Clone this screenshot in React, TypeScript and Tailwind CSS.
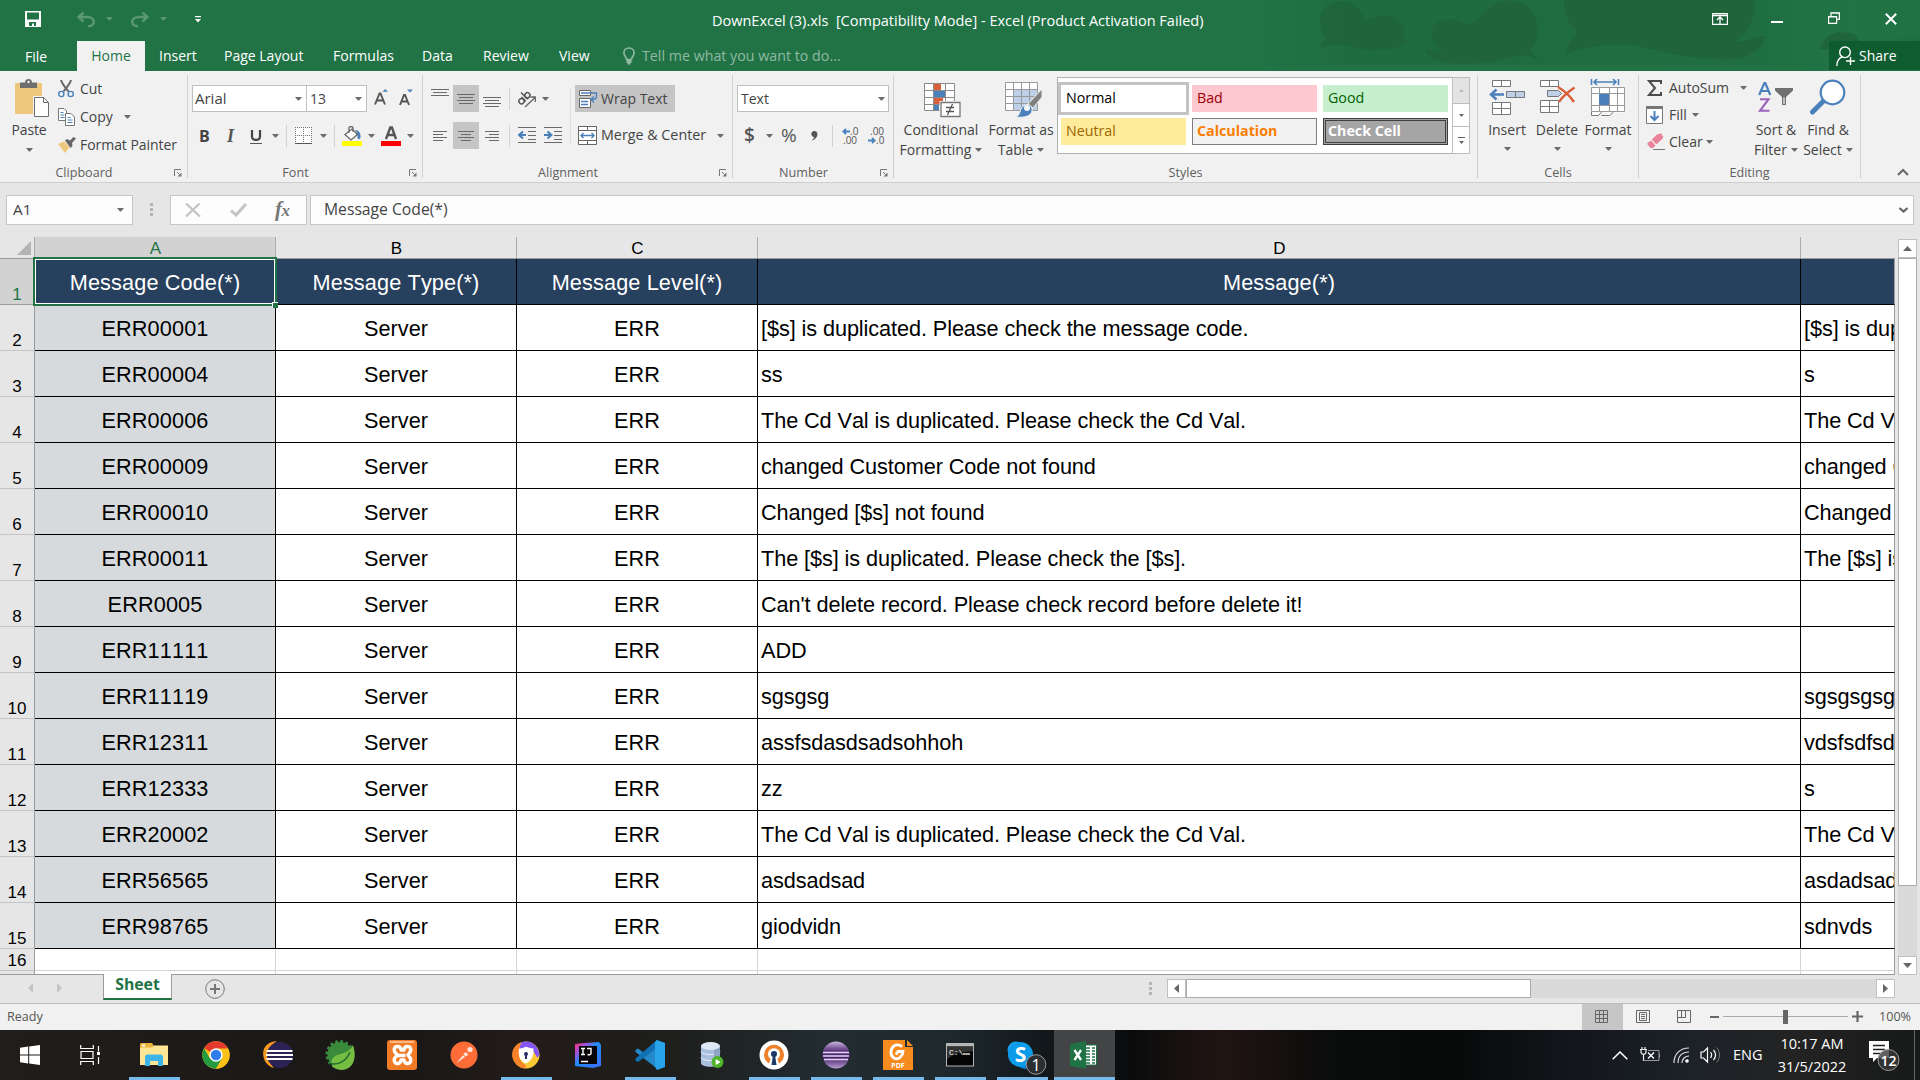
import React from "react";

type Kids = { children?: React.ReactNode };

const Caret = ({ className = "" }: { className?: string }) => (
  <svg className={`shrink-0 ${className}`} width="7" height="4" viewBox="0 0 7 4">
    <path d="M0 0h7L4 3.6H3z" fill="#6b6b6b" />
  </svg>
);

const Launcher = () => (
  <svg width="8" height="8" viewBox="0 0 8 8" className="mr-[5px] shrink-0">
    <path d="M.5 7V.5H7" fill="none" stroke="#777" />
    <path d="M3 3l2.5 2.5" stroke="#777" />
    <path d="M7.5 3.5v4h-4z" fill="#777" />
  </svg>
);

function Group({ label, launcher, className, children }: Kids & { label: string; launcher?: boolean; className: string }) {
  return (
    <section className={`mt-[4px] flex h-[103px] shrink-0 flex-col border-r border-[#d0d0d0] ${className}`}>
      <div className="h-[88px] shrink-0">{children}</div>
      <div className="flex h-[15px] items-center pt-[5px]">
        <div className={`flex-1 text-center text-[12.6px] leading-none whitespace-nowrap text-[#5f5f5f] ${launcher ? "pr-[6px]" : ""}`}>{label}</div>
        {launcher && <Launcher />}
      </div>
    </section>
  );
}

const Sep = ({ className = "" }: { className?: string }) => <span className={`w-px shrink-0 bg-[#d2d2d2] ${className}`} />;

const Lines = ({ rows, h, className = "" }: { rows: [number, number, number][]; h: number; className?: string }) => (
  <svg width="18" height={h} viewBox={`0 0 18 ${h}`} className={`shrink-0 ${className}`}>
    {rows.map(([x, y, w]) => (
      <rect key={y} x={x} y={y} width={w} height="1" fill="#6a6a6a" />
    ))}
  </svg>
);

/* ---------- title bar and tabs ---------- */

function TitleArt() {
  return (
    <svg className="absolute top-0 left-[1260px]" width="660" height="65" viewBox="0 0 660 65">
      <defs>
        <linearGradient id="fade" x1="0" x2="1" y1="0" y2="0">
          <stop offset="0" stopColor="#1f6a40" stopOpacity="0" />
          <stop offset=".14" stopColor="#1f6a40" stopOpacity=".85" />
          <stop offset=".75" stopColor="#1f6c41" stopOpacity=".8" />
          <stop offset=".9" stopColor="#217346" stopOpacity=".3" />
          <stop offset="1" stopColor="#1f6a40" stopOpacity=".7" />
        </linearGradient>
      </defs>
      <rect width="660" height="65" fill="url(#fade)" />
      <g fill="#1f643b">
        <path opacity=".8" d="M60 48c2-6 4-8 6-10-9-10-8-24 0-31 8-8 25-7 33 2 5 5 5 8 6 10 20-5 34-5 38 6 3 8 1 12 0 15l5 2c-9 7-20 8-40 8-16-2-30-10-48-2z" />
        <path d="M167 49c3 0 10 3 20 4l-1-1c-12-3-15-13-14-22 2-10 20-16 34-5 14-4 18-14 28-21 14-7 34-3 41 13 6 15 2 25-5 32 2 4 6 6 8 11-10-6-16-6-26-3-22 8-66 8-78 3-6-4-8-8-7-11z" />
        <path d="M304 0h190c2 14-3 32-20 42 14 0 22-7 31-6-2 12-14 22-33 23-40 2-70-8-98-14-30-2-50 2-69 9 3-9 6-16 13-22-12-10-14-22-14-32z" />
        <path d="M562 44c4-8 16-16 30-11 8 4 8 12 8 16h-40z" />
      </g>
      <path d="M540 0c14 4 26 10 32 32l88 6V0z" fill="#217346" opacity=".6" />
    </svg>
  );
}

const tabs: [string, string][] = [
  ["Insert", "w-[65px]"],
  ["Page Layout", "w-[109px]"],
  ["Formulas", "w-[89px]"],
  ["Data", "w-[61px]"],
  ["Review", "w-[76px]"],
  ["View", "w-[63px]"],
];

function TitleBar() {
  return (
    <header className="relative h-[71px] bg-[#217346] text-white">
      <TitleArt />
      <div className="relative flex h-[41px]">
        <div className="flex w-[712px] items-start">
          <svg width="16" height="16" viewBox="0 0 16 16" className="mt-[11px] ml-[25px]">
            <path fillRule="evenodd" fill="#fff" d="M0 0h16v16H0zM2 1.400h12v7.200H2zM4 11h7v4H9v-2.600H7V15H4z" />
          </svg>
          <svg width="18" height="16" viewBox="0 0 18 16" className="mt-[12px] ml-[36px]">
            <path d="M1 5h9c9 0 9 9.300 1 9.300M6.500 .5L1.500 5l5 4.500" fill="none" stroke="#5a9775" strokeWidth="2.400" />
          </svg>
          <svg width="7" height="4" viewBox="0 0 7 4" className="mt-[17px] ml-[11px]"><path d="M0 0h7L4 3.600H3z" fill="#5a9775" /></svg>
          <svg width="18" height="16" viewBox="0 0 18 16" className="mt-[12px] ml-[18px]">
            <path d="M17 5H8C-1 5-1 14.300 7 14.300M11.500 .5l5 4.500-5 4.500" fill="none" stroke="#5a9775" strokeWidth="2.400" />
          </svg>
          <svg width="7" height="4" viewBox="0 0 7 4" className="mt-[17px] ml-[11px]"><path d="M0 0h7L4 3.600H3z" fill="#5a9775" /></svg>
          <svg width="6" height="7" viewBox="0 0 6 7" className="mt-[16px] ml-[28px]"><path d="M0 0h6v1.300H0zM0 3h6L3 6.500z" fill="#fff" /></svg>
        </div>
        <div className="w-[1000px] pt-[11px] text-[14.5px] leading-[20px] whitespace-pre">DownExcel (3).xls  [Compatibility Mode] - Excel (Product Activation Failed)</div>
        <svg width="16" height="12" viewBox="0 0 16 12" className="mt-[13px]">
          <path d="M.5.5h15v11H.5zM1 2.500h14M8 11V4.500M5 7l3-3 3 3" fill="none" stroke="#fff" strokeWidth="1.300" />
        </svg>
        <span className="mt-[21px] ml-[43px] h-[2px] w-[12px] bg-white" />
        <svg width="12" height="12" viewBox="0 0 12 12" className="mt-[12px] ml-[45px]">
          <path d="M.6 4.500h8v6.900h-8zM3 4V.8h8.400v6.500H9M.6 5h8M3 1.200h8.400" fill="none" stroke="#fff" strokeWidth="1.200" />
        </svg>
        <svg width="12" height="12" viewBox="0 0 12 12" className="mt-[13px] ml-[45px]">
          <path d="M.8.8l10.400 10.400M11.200.8L.8 11.200" stroke="#fff" strokeWidth="2" />
        </svg>
      </div>
      <nav className="relative flex h-[30px] items-center text-[14px] leading-none whitespace-nowrap">
        <span className="w-[77px] pt-[2px] pl-[25px]">File</span>
        <span className="mr-[14px] flex h-full w-[68px] items-center justify-center bg-[#f1f1f1] text-[#217346]">Home</span>
        {tabs.map(([t, w]) => (
          <span key={t} className={w}>{t}</span>
        ))}
        <svg width="12" height="18" viewBox="0 0 12 18" className="ml-px shrink-0 text-[#90b9a3]">
          <path d="M3.500 12.500c0-2.500-2.600-3.500-2.600-6.600C.9 3 3 1 6 1s5.100 2 5.100 4.900c0 3.100-2.600 4.100-2.600 6.600z" fill="none" stroke="currentColor" strokeWidth="1.600" />
          <path d="M3.500 13h5v3H7.500v1.500h-3V16h-1z" fill="currentColor" />
        </svg>
        <span className="w-[1194px] pl-[7px] text-[14.25px] text-[#90b9a3]">Tell me what you want to do...</span>
        <span className="mb-px flex h-[29px] w-[91px] items-center self-start bg-[#0f5c30] pl-[7px]">
          <svg width="19" height="20" viewBox="0 0 19 20" className="mr-[4px]">
            <circle cx="9" cy="6.300" r="5.300" fill="none" stroke="#fff" strokeWidth="1.400" />
            <path d="M.8 20c0-5 2.500-8.300 6-9.500M14.500 11v8M10 15h9" fill="none" stroke="#fff" strokeWidth="1.400" />
          </svg>
          Share
        </span>
      </nav>
    </header>
  );
}

/* ---------- ribbon ---------- */

function Clipboard() {
  return (
    <Group label="Clipboard" launcher className="w-[188px]">
      <div className="flex">
        <div className="flex w-[58px] flex-col items-center">
          <svg width="34" height="38" viewBox="0 0 34 38" className="mt-[4px] ml-[6px]">
            <rect x="0" y="4" width="27" height="31" rx="1" fill="#edc77d" />
            <path d="M5 3.500h5C10 1 11.500 0 13.500 0S17 1 17 3.500h5V9H5z" fill="#6e6e6e" />
            <circle cx="13.500" cy="3" r="1.200" fill="#f1f1f1" />
            <path d="M18 17h11l5 5v16H18z" fill="#f1f1f1" />
            <path d="M19.500 18.500h9l5 5v14h-14z" fill="#fff" stroke="#6e6e6e" />
            <path d="M28.500 18.500v5h5" fill="none" stroke="#6e6e6e" />
          </svg>
          <span className="mt-[5px] text-[14px] leading-[16px] tracking-[-0.1px]">Paste</span>
          <Caret className="mt-[10px]" />
        </div>
        <div className="flex flex-col text-[14px] leading-[28px] tracking-[-0.05px] whitespace-nowrap">
          <div className="flex h-[28px] items-center">
            <svg width="16" height="18" viewBox="0 0 16 18" className="mr-[6px]">
              <path d="M3 0c1 4 4 7 7.500 11.500M13 0c-1 4-4 7-7.500 11.500" fill="none" stroke="#666" strokeWidth="2" />
              <circle cx="3.300" cy="14" r="2.600" fill="none" stroke="#4a80bb" strokeWidth="1.400" />
              <circle cx="12.700" cy="14" r="2.600" fill="none" stroke="#4a80bb" strokeWidth="1.400" />
            </svg>
            Cut
          </div>
          <div className="flex h-[28px] items-center">
            <svg width="17" height="18" viewBox="0 0 17 18" className="mr-[5px]">
              <path d="M.5.5H6l2.500 2.500v9.500h-8z" fill="#fff" stroke="#777" />
              <path d="M2.500 4.500h3M2.500 7h4M2.500 9.500h4" stroke="#4a80bb" />
              <path d="M7.500 5.500H13l3.500 3.500v8.500h-9z" fill="#fff" stroke="#777" />
              <path d="M9.500 9.500h3M9.500 12h5M9.500 14.500h5" stroke="#4a80bb" />
            </svg>
            <span className="w-[44px]">Copy</span>
            <Caret />
          </div>
          <div className="flex h-[28px] items-center">
            <svg width="18" height="16" viewBox="0 0 18 16" className="mr-[4px]">
              <path d="M0 7l6-2.500 5.500 5.500L7 16z" fill="#edc77d" />
              <path d="M7 3.500L9 2l3 1.500L15.500 0 18 1.500 14 6l.5 3-2 2z" fill="#666" />
            </svg>
            Format Painter
          </div>
        </div>
      </div>
    </Group>
  );
}

function FontGroup() {
  return (
    <Group label="Font" launcher className="w-[235px]">
      <div className="mt-[10px] ml-[4px] flex h-[27px] text-[14px] leading-[25px]">
        <div className="flex w-[115px] items-center border border-[#c0c0c0] bg-white pl-[2px]"><span className="w-[100px] text-[15px]">Arial</span><Caret /></div>
        <div className="-ml-px flex w-[61px] items-center border border-[#c0c0c0] bg-white pl-[3px]"><span className="w-[45px]">13</span><Caret /></div>
        <svg width="15" height="18" viewBox="0 0 15 18" className="mt-[3px] ml-[7px]">
          <path d="M1 16.500L5.500 5.500h1L11 16.500M3 12.500h6" fill="none" stroke="#555" strokeWidth="1.900" /><path d="M8.500 3.800h5.500L11.200 1z" fill="#4a80bb" />
        </svg>
        <svg width="15" height="18" viewBox="0 0 15 18" className="mt-[3px] ml-[10px]">
          <path d="M1 17L5 7h1l4 10M3 13.500h5" fill="none" stroke="#555" strokeWidth="1.900" /><path d="M8 1.500h6L11 4.500z" fill="#4a80bb" />
        </svg>
      </div>
      <div className="mt-[10px] flex h-[27px] items-center">
        <span className="ml-[11px] w-[28px] text-[16px] leading-none font-bold text-[#444]">B</span>
        <span className="w-[24px] font-['Liberation_Serif'] text-[18px] leading-none font-bold text-[#555] italic">I</span>
        <svg width="12" height="17" viewBox="0 0 12 17" className="mt-[3px] -ml-px mr-px"><path d="M2 1v6.500C2 12 10 12 10 7.500V1" fill="none" stroke="#444" strokeWidth="2.200" /><path d="M0 14.500h12" stroke="#555" /></svg>
        <Caret className="ml-[9px]" />
        <Sep className="ml-[7px] h-[22px]" />
        <svg width="17" height="17" viewBox="0 0 17 17" className="ml-[8px]">
          <path d="M1 1h7v7H1zM9 1h7v7H9zM1 9h7v7H1zM9 9h7v7H9z" fill="#fff" />
          <path d="M.5 0v16M16.500 0v16M8.500 0v16M0 .5h17M0 8.500h17" fill="none" stroke="#777" strokeDasharray="1 1" /><path d="M0 16.500h17" stroke="#555" />
        </svg>
        <Caret className="ml-[8px]" />
        <Sep className="ml-[7px] h-[22px]" />
        <svg width="20" height="20" viewBox="0 0 20 20" className="ml-[7px]">
          <path d="M13 4c4 0 6 3 5.500 8-.5 1.500-2.500 1.500-3 0 0-3 0-5-2.500-8z" fill="#4a80bb" />
          <path d="M3 8.500L10 3l5.500 5.500L9 14z" fill="#fff" stroke="#666" strokeWidth="1.300" /><path d="M7 7V2c0-2 4-2 4 0v4" fill="none" stroke="#666" strokeWidth="1.300" />
          <rect y="15" width="20" height="5" fill="#ff0" />
        </svg>
        <Caret className="ml-[6px]" />
        <svg width="20" height="20" viewBox="0 0 20 20" className="ml-[6px]">
          <path d="M5 13L9.300 1.500h1.600L15 13M6.500 9h7" fill="none" stroke="#555" strokeWidth="2.400" /><rect y="15" width="20" height="5" fill="red" />
        </svg>
        <Caret className="ml-[6px]" />
      </div>
    </Group>
  );
}

function Indent({ right, className }: { right?: boolean; className: string }) {
  return (
    <svg width="18" height="17" viewBox="0 0 18 17" className={className}>
      <path d="M0 .5h18M10 4.500h8M10 8.500h8M10 12.500h8M0 15.500h18" stroke="#6a6a6a" />
      <path d={right ? "M0 8h7M3.500 4.500L7.300 8l-3.800 3.500" : "M8 8H1.500M5 4.500L1.200 8 5 11.500"} fill="none" stroke="#4a80bb" strokeWidth="2.200" />
    </svg>
  );
}

function Alignment() {
  return (
    <Group label="Alignment" launcher className="w-[310px]">
      <div className="mt-[10px] flex">
        <div className="flex w-[147px] flex-col">
          <div className="flex h-[27px] items-center">
            <Lines className="mb-[12px] ml-[8px]" h={7} rows={[[0, 0, 18], [2, 3, 14], [0, 6, 18]]} />
            <span className="ml-[4px] flex h-[27px] w-[26px] items-center justify-center bg-[#c5c5c5]">
              <Lines h={10} rows={[[0, 0, 18], [2, 3, 14], [0, 6, 18], [2, 9, 14]]} />
            </span>
            <Lines className="mt-[7px] ml-[4px]" h={10} rows={[[0, 0, 18], [2, 3, 14], [0, 6, 18], [2, 9, 14]]} />
            <Sep className="ml-[8px] h-[22px]" />
            <svg width="19" height="18" viewBox="0 0 19 18" className="ml-[7px] shrink-0">
              <g transform="rotate(-45 7 8)" fill="none" stroke="#555" strokeWidth="1.500"><circle cx="3" cy="8.500" r="2.600" /><path d="M6 5.500v6M8.800 2v9.500" /><circle cx="11.300" cy="8.500" r="2.600" /></g>
              <path d="M8 17L18 7.500M13.500 7h4.800v5" fill="none" stroke="#666" strokeWidth="1.300" />
            </svg>
            <Caret className="ml-[6px]" />
          </div>
          <div className="mt-[10px] flex h-[27px] items-center">
            <Lines className="ml-[10px]" h={10} rows={[[0, 0, 14], [0, 3, 10], [0, 6, 14], [0, 9, 10]]} />
            <span className="ml-[2px] flex h-[27px] w-[26px] items-center justify-center bg-[#c5c5c5]">
              <Lines h={10} rows={[[1, 0, 16], [4, 3, 10], [1, 6, 16], [4, 9, 10]]} />
            </span>
            <Lines className="ml-[6px]" h={10} rows={[[0, 0, 14], [4, 3, 10], [0, 6, 14], [4, 9, 10]]} />
            <Sep className="ml-[6px] h-[22px]" />
            <Indent className="ml-[8px] shrink-0" />
            <Indent className="ml-[8px] shrink-0" right />
          </div>
        </div>
        <Sep className="mt-[4px] h-[55px] opacity-60" />
        <div className="ml-[4px] flex flex-col text-[14px] leading-none whitespace-nowrap">
          <div className="flex h-[27px] w-[100px] items-center bg-[#c5c5c5] pl-[4px]">
            <svg width="19" height="18" viewBox="0 0 19 18" className="mr-[3px] shrink-0">
              <path d="M.5.5h11v5H.5zM.5 8.500h11v9H.5z" fill="#fff" stroke="#666" />
              <path d="M2 3h15.500v4c0 2-2 2.500-5 2.500M15 6.500L12 9.500l3 3M2 11.500h7M2 14.500h7" fill="none" stroke="#4a80bb" strokeWidth="1.400" />
            </svg>
            Wrap Text
          </div>
          <div className="mt-[10px] flex h-[27px] items-center pl-[3px]">
            <svg width="19" height="19" viewBox="0 0 19 19" className="mr-[4px] shrink-0">
              <path d="M.5.5h18v18H.5zM.5 4.500h18M.5 14.500h18M9.500.5v4M9.500 14.500v4" fill="#fff" stroke="#666" />
              <path d="M3 9.500h13M5.500 7L3 9.500 5.500 12M13.500 7L16 9.500 13.500 12" fill="none" stroke="#4a80bb" strokeWidth="1.400" />
            </svg>
            <span className="w-[116px] text-[14.3px]">Merge &amp; Center</span>
            <Caret />
          </div>
        </div>
      </div>
    </Group>
  );
}

function NumberGroup() {
  return (
    <Group label="Number" launcher className="w-[161px]">
      <div className="mt-[10px] ml-[4px] flex h-[27px] w-[152px] items-center border border-[#c0c0c0] bg-white pl-[3px] text-[14px] leading-none">
        <span className="w-[137px]">Text</span><Caret />
      </div>
      <div className="mt-[10px] flex h-[27px] items-center text-[#555]">
        <span className="ml-[11px] w-[22px] text-[19px] leading-none font-semibold">$</span>
        <Caret />
        <span className="ml-[8px] w-[30px] text-[19px] leading-none">%</span>
        <svg width="7" height="10" viewBox="0 0 7 10"><path d="M3.500 0C8 0 7.500 8 .5 9.500 3 7.500 3 6.500 3 6 -.5 6-.8 0 3.500 0z" fill="#555" /></svg>
        <Sep className="ml-[14px] h-[22px]" />
        <div className="ml-[9px] flex w-[26px] flex-col text-[10px] leading-[9px]">
          <span className="flex items-center"><svg width="8" height="7" viewBox="0 0 8 7"><path d="M8 3.500H2M4 .8L1.200 3.500 4 6.200" fill="none" stroke="#4a80bb" strokeWidth="1.800" /></svg>.0</span>
          <span className="pl-px">.00</span>
        </div>
        <div className="flex flex-col text-[10px] leading-[9px]">
          <span className="pl-[2px]">.00</span>
          <span className="flex items-center"><svg width="8" height="7" viewBox="0 0 8 7"><path d="M0 3.500h6M4 .8l2.800 2.700L4 6.200" fill="none" stroke="#4a80bb" strokeWidth="1.800" /></svg>.0</span>
        </div>
      </div>
    </Group>
  );
}

function BigButton({ icon, lines, width, split }: { icon: React.ReactNode; lines: string[]; width: string; split?: boolean }) {
  return (
    <div className={`flex shrink-0 flex-col items-center text-[14px] leading-[20px] whitespace-nowrap ${width}`}>
      <div className="h-[45px] pt-[4px]">{icon}</div>
      <span>{lines[0]}</span>
      {split ? <Caret className="mt-[7px]" /> : <span className="flex items-center gap-[4px]">{lines[1]}<Caret /></span>}
    </div>
  );
}

const CondIcon = (
  <svg width="38" height="36" viewBox="0 0 38 36" className="mt-[3px] ml-[4px]">
    <path d="M.5 1.500h30v27H.5z" fill="#fff" />
    <path d="M10 2h7v6h-7zM10 16h9v6h-9z" fill="#d9603b" /><path d="M10 9h11v6H10zM10 23h5v6h-5z" fill="#4a80bb" />
    <path d="M.5 1.500h30v27H.5zM.5 8.500h30M.5 15.500h30M.5 22.500h30M9.500 1v28M21.500 1v28" fill="none" stroke="#8a8a8a" />
    <path d="M15.500 19h21v16.500h-21z" fill="#f1f1f1" />
    <path d="M17 20.500h19v14H17z" fill="#fff" stroke="#777" strokeWidth="1.300" />
    <path d="M22 25.500h8M22 29.500h8M28.500 22l-5 11" stroke="#555" strokeWidth="1.300" />
  </svg>
);

const TableIcon = (
  <svg width="38" height="36" viewBox="0 0 38 36" className="mt-[3px] ml-[3px]">
    <path d="M1.500.5h32v28h-32z" fill="#fff" /><path d="M10 8h24v20H10z" fill="#bdd0e8" />
    <path d="M1.500.5h32v28h-32zM1.500 7.500h32M1.500 14.500h32M1.500 21.500h32M9.500.5v28M17.500.5v28M25.500.5v28" fill="none" stroke="#999" />
    <path d="M38 7v8L29 26l-5-4z" fill="#808080" stroke="#f1f1f1" /><path d="M12 35c5-2 3-9 9-12 4-2 8 2 7 6-1 5-7 7-16 6z" fill="#4a80bb" stroke="#f1f1f1" />
    <circle cx="23" cy="26" r="3" fill="#f5f8fb" />
  </svg>
);

const swatches: [string, string][] = [
  ["Normal", "bg-white text-black outline-[3px] outline-[#c3c3c3]"],
  ["Bad", "bg-[#ffc7ce] text-[#9c0006]"],
  ["Good", "bg-[#c6efce] text-[#006100]"],
  ["Neutral", "bg-[#ffeb9c] text-[#9c6500]"],
  ["Calculation", "bg-[#f2f2f2] font-bold text-[#fa7d00] shadow-[inset_0_0_0_1px_#7f7f7f]"],
  ["Check Cell", "bg-[#a5a5a5] font-bold text-white shadow-[inset_0_0_0_1px_#3f3f3f,inset_0_0_0_2px_#a5a5a5,inset_0_0_0_3px_#3f3f3f]"],
];

function Styles() {
  return (
    <Group label="Styles" className="w-[584px]">
      <div className="flex">
        <BigButton width="w-[94px]" icon={CondIcon} lines={["Conditional", "Formatting"]} />
        <BigButton width="w-[66px]" icon={TableIcon} lines={["Format as", "Table"]} />
        <div className="mt-[2px] ml-[3px] grid h-[77px] w-[396px] grid-cols-[125px_125px_125px] content-start gap-[6px] border border-[#b0b0b0] bg-white pt-[7px] pl-[3px]">
          {swatches.map(([t, c]) => (
            <span key={t} className={`flex h-[27px] items-center pl-[5px] text-[14.25px] leading-none ${c}`}>{t}</span>
          ))}
        </div>
        <div className="mt-[2px] -ml-px flex h-[77px] w-[18px] flex-col border border-[#bdbdbd] bg-white">
          <span className="flex h-[26px] items-center justify-center border-b border-[#bdbdbd] bg-[#e3e3e3]"><svg width="5" height="3"><path d="M0 3h5L2.500 0z" fill="#bbb" /></svg></span>
          <span className="flex h-[23px] items-center justify-center border-b border-[#bdbdbd]"><svg width="5" height="3"><path d="M0 0h5L2.500 3z" fill="#666" /></svg></span>
          <span className="flex flex-1 items-center justify-center"><svg width="7" height="7"><path d="M0 0h7v1H0zM1 4h5L3.500 7z" fill="#666" /></svg></span>
        </div>
      </div>
    </Group>
  );
}

const InsertIcon = (
  <svg width="36" height="36" viewBox="0 0 36 36">
    <path d="M3.500 1.500h18v6h-18zM12.500 1.500v6M3.500 23.500h18v12h-18zM12.500 23.500v12M3.500 29.500h18" fill="#fff" stroke="#777" />
    <path d="M17.500 12.500h18v6h-18zM26.500 12.500v6" fill="#bdd0e8" stroke="#777" />
    <path d="M15 15.500H3M7.500 10.500l-5.500 5 5.500 5" fill="none" stroke="#4a80bb" strokeWidth="2.500" />
  </svg>
);
const DeleteIcon = (
  <svg width="36" height="36" viewBox="0 0 36 36" className="ml-[2px]">
    <path d="M.5 1.500h18v6H.5zM9.500 1.500v6M.5 21.500h18v12H.5zM9.500 21.500v12M.5 27.500h18" fill="#fff" stroke="#777" />
    <path d="M7.500 11.500h11l3 3-3 3h-11z" fill="#bdd0e8" stroke="#777" />
    <path d="M18 8c5 3 12 9 16 15M34.500 8.500C28 13 22 18 19 23" fill="none" stroke="#d9603b" strokeWidth="2.400" />
  </svg>
);
const FormatIcon = (
  <svg width="36" height="38" viewBox="0 0 36 38">
    <path d="M1.500 0v6M28.500 0v6M4 3h22M7 0L4 3l3 3M23 0l3 3-3 3" fill="none" stroke="#4a80bb" strokeWidth="1.600" />
    <path d="M1.500 8.500h33v25h-33z" fill="#fff" /><path d="M1.500 8.500h33v24h-33zM1.500 14.500h33M1.500 26.500h33M9.500 8v24M19.500 8v24M27.500 8v24" fill="none" stroke="#999" />
    <path d="M9 15h10v11H9z" fill="#4a80bb" /><path d="M1.500 33v3.500h7l3-3.500M11.500 36.500h8l4-3.500" fill="#fff" stroke="#777" />
  </svg>
);
const SortIcon = (
  <svg width="36" height="36" viewBox="0 0 36 36">
    <path d="M1.200 16L6.300 4h1L12.300 16M3 12h7.500" fill="none" stroke="#4a80bb" strokeWidth="2.200" />
    <path d="M2 20.200h8.500L2 31.800h9.500" fill="none" stroke="#9b62bb" strokeWidth="2.100" />
    <path d="M17 9h18v2.500L28 18v8h-4v-8l-7-6.500z" fill="#707070" /><path d="M26 18.500v6.500" stroke="#f1f1f1" strokeWidth="1.300" />
  </svg>
);
const FindIcon = (
  <svg width="36" height="36" viewBox="0 0 36 36">
    <path d="M2.500 33L14 21.500" stroke="#4a80bb" strokeWidth="5" strokeLinecap="round" /><circle cx="22.500" cy="13.500" r="11.800" fill="#fff" stroke="#4a80bb" strokeWidth="2.200" />
  </svg>
);

function Editing() {
  return (
    <Group label="Editing" className="w-[222px]">
      <div className="flex">
        <div className="-mt-px flex w-[112px] flex-col pl-[8px] text-[14px] leading-none">
          <div className="flex h-[27px] items-center">
            <svg width="15" height="16" viewBox="0 0 15 16" className="mr-[7px]"><path d="M14 4V1H2l6 7-6 7h12v-3" fill="none" stroke="#4c4c4c" strokeWidth="2" /></svg>
            <span className="w-[71px]">AutoSum</span><Caret />
          </div>
          <div className="flex h-[27px] items-center">
            <svg width="17" height="18" viewBox="0 0 17 18" className="mr-[6px] -ml-px"><path d="M.5.500h16v17H.5z" fill="#fff" stroke="#777" /><path d="M0 0h17v3H0z" fill="#777" /><path d="M8.500 5v9M4.500 10l4 4 4-4" fill="none" stroke="#4a80bb" strokeWidth="2" /></svg>
            <span className="w-[23px]">Fill</span><Caret />
          </div>
          <div className="flex h-[27px] items-center">
            <svg width="18" height="17" viewBox="0 0 18 17" className="mr-[4px]"><path d="M10 1.500L14 .3l2.300 3.500-1 2.200-6 5.500-4.500-5z" fill="#e8839a" /><path d="M4 7.500L8.500 12.500 6 15H3.500L.5 11.500V10z" fill="#e8839a" /><path d="M6 16.500h12" stroke="#777" /></svg>
            <span className="w-[37px]">Clear</span><Caret />
          </div>
        </div>
        <BigButton width="w-[50px]" icon={SortIcon} lines={["Sort &", "Filter"]} />
        <BigButton width="w-[54px]" icon={FindIcon} lines={["Find &", "Select"]} />
      </div>
    </Group>
  );
}

function Ribbon() {
  return (
    <div className="flex h-[112px] border-b border-[#cfcfcf] bg-[#f1f1f1] text-[#444]">
      <Clipboard />
      <FontGroup />
      <Alignment />
      <NumberGroup />
      <Styles />
      <Group label="Cells" className="w-[161px]">
        <div className="flex pl-[4px]">
          <BigButton width="w-[50px]" icon={InsertIcon} lines={["Insert"]} split />
          <BigButton width="w-[50px]" icon={DeleteIcon} lines={["Delete"]} split />
          <BigButton width="w-[52px]" icon={FormatIcon} lines={["Format"]} split />
        </div>
      </Group>
      <Editing />
      <svg width="12" height="8" viewBox="0 0 12 8" className="mt-[97px] ml-[36px]"><path d="M1 7l5-5 5 5" fill="none" stroke="#666" strokeWidth="2" /></svg>
    </div>
  );
}

function FormulaBar() {
  return (
    <div className="flex h-[54px] bg-[#e6e6e6] pt-[12px] text-[15px] leading-none text-[#444]">
      <div className="ml-[6px] flex h-[30px] w-[127px] items-center border border-[#c6c6c6] bg-[#fdfdfd] pl-[6px]"><span className="w-[104px] text-[15.3px]">A1</span><Caret /></div>
      <div className="mt-[8px] ml-[17px] flex w-[20px] flex-col gap-[2px]">
        <i className="h-[3px] w-[3px] bg-[#b4b4b4]" /><i className="h-[3px] w-[3px] bg-[#b4b4b4]" /><i className="h-[3px] w-[3px] bg-[#b4b4b4]" />
      </div>
      <div className="flex h-[30px] w-[137px] items-center border border-[#c6c6c6] bg-[#fdfdfd]">
        <svg width="16" height="14" viewBox="0 0 16 14" className="ml-[14px]"><path d="M1 .5L15 13.500M14.500 .5L1 13.500" stroke="#c4c4c4" strokeWidth="2.200" /></svg>
        <svg width="17" height="14" viewBox="0 0 17 14" className="ml-[29px]"><path d="M1 7.500l5 4.500L16 1" fill="none" stroke="#c4c4c4" strokeWidth="3" /></svg>
        <span className="mb-[2px] ml-[28px] font-['Liberation_Serif'] text-[21px] font-bold tracking-[-0.5px] text-[#777] italic">f<span className="text-[17px]">x</span></span>
      </div>
      <div className="ml-[3px] flex h-[30px] w-[1604px] items-center border border-[#c6c6c6] bg-[#fdfdfd] pl-[13px]">
        <span className="w-[1575px] text-[15.7px]">Message Code(*)</span>
        <svg width="9" height="6" viewBox="0 0 9 6"><path d="M.5 1l4 3.500 4-3.500" fill="none" stroke="#666" strokeWidth="2.200" /></svg>
      </div>
    </div>
  );
}

/* ---------- sheet ---------- */

const rows: [string, string, string][] = [
  ["ERR00001", "[$s] is duplicated. Please check the message code.", "[$s] is duplicated."],
  ["ERR00004", "ss", "s"],
  ["ERR00006", "The Cd Val is duplicated. Please check the Cd Val.", "The Cd Val is"],
  ["ERR00009", "changed Customer Code not found", "changed Customer"],
  ["ERR00010", "Changed [$s] not found", "Changed [$s]"],
  ["ERR00011", "The [$s] is duplicated. Please check the [$s].", "The [$s] is"],
  ["ERR0005", "Can't delete record. Please check record before delete it!", ""],
  ["ERR11111", "ADD", ""],
  ["ERR11119", "sgsgsg", "sgsgsgsgsg"],
  ["ERR12311", "assfsdasdsadsohhoh", "vdsfsdfsdfs"],
  ["ERR12333", "zz", "s"],
  ["ERR20002", "The Cd Val is duplicated. Please check the Cd Val.", "The Cd Val is"],
  ["ERR56565", "asdsadsad", "asdadsadas"],
  ["ERR98765", "giodvidn", "sdnvds"],
];

const ColHead = ({ t, className }: { t: string; className: string }) => (
  <div className={`flex h-[21px] items-center justify-center border-r pt-[2px] pl-px text-[17px] leading-none ${className}`}>{t}</div>
);

const headCell = "flex items-center justify-center border-r border-b border-black bg-[#27405d] pt-[2px] text-white tracking-[0.12px]";
const bodyCell = "flex items-center overflow-hidden border-r border-b border-black bg-white pt-[2px] whitespace-nowrap";

function Sheet() {
  return (
    <div className="flex h-[738px] bg-[#e6e6e6] font-['Liberation_Sans'] text-black [font-kerning:none]">
      <div className="w-[1895px] shrink-0 overflow-hidden border-b border-[#9b9b9b]">
        <div className="flex h-[22px] border-b border-[#9b9b9b]">
          <div className="flex h-[21px] w-[35px] shrink-0 items-end justify-end border-r border-[#ababab] pr-[3px] pb-[3px]"><svg width="14" height="14"><path d="M14 0v14H0z" fill="#b4b4b4" /></svg></div>
          <ColHead t="A" className="w-[241px] border-[#ababab] bg-[#d2d2d2] text-[#217346]" />
          <ColHead t="B" className="w-[241px] border-[#ababab]" />
          <ColHead t="C" className="w-[241px] border-[#ababab]" />
          <ColHead t="D" className="w-[1043px] border-[#ababab]" />
        </div>
        <div className="flex h-[46px] text-[21.7px] leading-none">
          <div className="flex w-[35px] shrink-0 items-end justify-center border-r border-b border-[#9b9b9b] bg-[#d2d2d2] pb-px text-[17px] text-[#217346]">1</div>
          <div className={`relative w-[241px] ${headCell}`}>
            Message Code(*)
            <span className="absolute -top-[2px] -left-[2px] h-[49px] w-[244px] border-2 border-[#217346] shadow-[inset_0_0_0_1px_white]" />
            <span className="absolute -right-[3px] -bottom-[4px] h-[6px] w-[6px] border-t border-l border-white bg-[#217346]" />
          </div>
          <div className={`w-[241px] ${headCell}`}>Message Type(*)</div>
          <div className={`w-[241px] ${headCell}`}>Message Level(*)</div>
          <div className={`w-[1043px] ${headCell}`}>Message(*)</div>
          <div className="w-[94px] border-r border-b border-r-[#9b9b9b] border-b-black bg-[#27405d]" />
        </div>
        {rows.map(([code, msg, extra], i) => (
          <div key={code} className="flex h-[46px] text-[21.7px] leading-[28px]">
            <div className="flex w-[35px] shrink-0 items-end justify-center border-r border-b border-r-[#9b9b9b] border-b-[#c4c4c4] pb-px text-[17px] leading-none">{i + 2}</div>
            <div className="flex w-[241px] items-center justify-center border-r border-b border-black bg-[#d6dadd] pt-[2px] tracking-[0.12px]">{code}</div>
            <div className={`w-[241px] justify-center ${bodyCell}`}>Server</div>
            <div className={`w-[241px] justify-center ${bodyCell}`}>ERR</div>
            <div className={`w-[1043px] pl-[3px] tracking-[-0.09px] ${bodyCell}`}>{msg}</div>
            <div className="flex w-[94px] items-center overflow-hidden border-r border-b border-r-[#9b9b9b] border-b-black bg-white pt-[2px] pl-[3px] tracking-[-0.09px] whitespace-nowrap">{extra}</div>
          </div>
        ))}
        {[22, 4].map((h) => (
          <div key={h} className={h === 22 ? "flex h-[22px]" : "flex h-[4px]"}>
            <div className="flex w-[35px] shrink-0 items-end justify-center border-r border-b border-r-[#9b9b9b] border-b-[#c4c4c4] pb-px text-[17px] leading-none">{h === 22 ? 16 : ""}</div>
            <div className="w-[241px] border-r border-b border-[#d4d4d4] bg-white" />
            <div className="w-[241px] border-r border-b border-[#d4d4d4] bg-white" />
            <div className="w-[241px] border-r border-b border-[#d4d4d4] bg-white" />
            <div className="w-[1043px] border-r border-b border-[#d4d4d4] bg-white" />
            <div className="w-[94px] border-r border-b border-r-[#9b9b9b] border-b-[#d4d4d4] bg-white" />
          </div>
        ))}
      </div>
      <div className="mt-[2px] ml-[3px] flex h-[736px] w-[19px] flex-col bg-[#dadada]">
        <span className="flex h-[19px] items-center justify-center border border-[#c0c0c0] bg-white"><svg width="9" height="5"><path d="M0 5h9L4.500 0z" fill="#666" /></svg></span>
        <span className="h-[628px] border border-[#ababab] bg-white" />
        <span className="mt-auto flex h-[19px] items-center justify-center border border-[#c0c0c0] bg-white"><svg width="9" height="5"><path d="M0 0h9L4.500 5z" fill="#666" /></svg></span>
      </div>
    </div>
  );
}

function SheetTabs() {
  return (
    <div className="flex h-[29px] items-start border-b border-[#bdbdbd] bg-[#e6e6e6]">
      <svg width="5" height="10" className="mt-[8px] ml-[28px]"><path d="M5 0v10L0 5z" fill="#c4c4c4" /></svg>
      <svg width="5" height="10" className="mt-[8px] ml-[24px]"><path d="M0 0v10l5-5z" fill="#c4c4c4" /></svg>
      <span className="-mt-px ml-[41px] flex h-[26px] w-[69px] items-center justify-center border-x border-b-2 border-x-[#9b9b9b] border-b-[#217346] bg-white pb-[2px] text-[15.8px] leading-none font-bold text-[#217346]">Sheet</span>
      <svg width="20" height="20" viewBox="0 0 20 20" className="mt-[4px] ml-[33px]"><circle cx="10" cy="10" r="9.300" fill="none" stroke="#777" /><path d="M10 5v10M5 10h10" stroke="#777" strokeWidth="2" /></svg>
      <div className="mt-[7px] ml-[924px] flex w-[18px] flex-col gap-[2px]">
        <i className="h-[3px] w-[3px] bg-[#b4b4b4]" /><i className="h-[3px] w-[3px] bg-[#b4b4b4]" /><i className="h-[3px] w-[3px] bg-[#b4b4b4]" />
      </div>
      <div className="mt-[4px] flex h-[19px] w-[728px] bg-[#dadada]">
        <span className="flex w-[19px] items-center justify-center border border-[#c0c0c0] bg-white"><svg width="5" height="9"><path d="M5 0v9L0 4.500z" fill="#666" /></svg></span>
        <span className="w-[345px] border border-[#ababab] bg-white" />
        <span className="ml-auto flex w-[19px] items-center justify-center border border-[#c0c0c0] bg-white"><svg width="5" height="9"><path d="M0 0v9l5-4.500z" fill="#666" /></svg></span>
      </div>
    </div>
  );
}

function StatusBar() {
  return (
    <div className="flex h-[26px] items-center bg-[#f1f1f1] text-[12.6px] leading-none text-[#555]">
      <span className="w-[1582px] pl-[7px]">Ready</span>
      <span className="flex h-full w-[41px] items-center justify-center bg-[#c6c6c6]">
        <svg width="13" height="13" viewBox="0 0 13 13" className="mr-[2px] mb-[2px]"><path d="M.5.5h12v12H.5zM.5 4.500h12M.5 8.500h12M4.500.5v12M8.500.5v12" fill="none" stroke="#666" /></svg>
      </span>
      <svg width="14" height="13" viewBox="0 0 14 13" className="mb-[2px] ml-[13px]"><path d="M.5.5h13v12H.5zM3.500 2.500h7v8h-7zM5 4.500h4M5 6.500h4M5 8.500h4" fill="none" stroke="#666" /></svg>
      <svg width="14" height="13" viewBox="0 0 14 13" className="mb-[2px] ml-[27px]"><path d="M.5.5h13v12H.5zM.5 7.500h8v-7M4.500.5v7" fill="none" stroke="#666" /></svg>
      <span className="mb-px ml-[19px] h-[2px] w-[9px] bg-[#666]" />
      <span className="mb-px ml-[4px] flex h-[14px] w-[125px] items-center bg-[linear-gradient(#aaa,#aaa)] bg-[length:100%_1px] bg-center bg-no-repeat pl-[60px]"><i className="h-[14px] w-[5px] bg-[#666]" /></span>
      <svg width="11" height="11" className="mb-px ml-[4px]"><path d="M5.500 0v11M0 5.500h11" stroke="#666" strokeWidth="2.200" /></svg>
      <span className="ml-[16px]">100%</span>
    </div>
  );
}

/* ---------- taskbar ---------- */

const Svg = ({ children, w = 30, h = 30 }: Kids & { w?: number; h?: number }) => (
  <svg width={w} height={h} viewBox={`0 0 ${w} ${h}`}>{children}</svg>
);

const apps: { icon: React.ReactNode; run?: boolean; active?: boolean }[] = [
  { icon: <Svg w={20} h={20}><path fill="#fff" d="M0 2.800l8.200-1.200v7.900H0zM9.200 1.400L20 0v9.500H9.200zM0 10.500h8.200v7.900L0 17.200zM9.200 10.500H20V20L9.200 18.600z" /></Svg> },
  { icon: <svg width="20" height="20" viewBox="0 0 20 20" className="mr-[3px]"><path d="M.7 0v3.500h12.600V0M.7 20v-3.500h12.600V20M1 6.500h12v7H1zM18.500 1v5.500M18.500 12v7" fill="none" stroke="#fff" strokeWidth="1.200" /><path d="M17 7h3v3h-3z" fill="#fff" /></svg> },
  {
    run: true,
    icon: <Svg w={28} h={24}><path d="M0 1.500C0 .5.500 0 1.500 0H12l2 3h14v19H0z" fill="#e8b339" /><path d="M2 1.500h3v2H2z" fill="#fff" /><path d="M0 4.500h12l2-2h14V22H0z" fill="#ffe694" /><path d="M5 23V14c0-1.500 1-2.500 2.500-2.500h13c1.500 0 2.500 1 2.500 2.500v9h-5v-5H10v5z" fill="#3cb4e7" /></Svg>,
  },
  {
    icon: <Svg w={28} h={28}><circle cx="14" cy="14" r="13.700" fill="#fbc116" /><path d="M14 14L2.100 7.200A13.700 13.700 0 0 1 25.900 7.200z" fill="#e33b2e" /><path d="M2.100 7.200A13.700 13.700 0 0 0 14 27.700L20 17.500 14 14 8 17.500z" fill="#249a41" /><path d="M14 7.500h12A13.700 13.700 0 0 1 14 27.700l6-10z" fill="#fbc116" /><circle cx="14" cy="14" r="6.700" fill="#fff" /><circle cx="14" cy="14" r="5.200" fill="#2f7de9" /></Svg>,
  },
  {
    icon: <Svg><path d="M14 1C3 2-2 9 1 19c2 5 6 8 10 9-8-8-8-20 3-27z" fill="#f79a1f" /><circle cx="17" cy="15" r="13" fill="#2c2255" /><path d="M3.500 11h26M3 15h27M3.500 19h26" stroke="#fff" strokeWidth="2" /></Svg>,
  },
  {
    icon: <Svg><circle cx="15" cy="14.500" r="12.500" fill="#3a8a3c" /><circle cx="15" cy="14.500" r="13" fill="none" stroke="#3a8a3c" strokeWidth="3" strokeDasharray="2.700 2.400" /><path d="M28 5c4 12 1 24-11 25C7 30 4 23 8 18c5-6 14-2 20-13z" fill="#76bd43" /><path d="M3 23c9 3 18-1 22-11" fill="none" stroke="#1e6b2e" strokeWidth="1.500" /></Svg>,
  },
  {
    icon: <Svg><rect width="30" height="30" rx="3" fill="#f07a26" /><path d="M3 1h24v2H3z" fill="#f9b888" /><path d="M11.500 15.500l-2.500-2c-3-3-2-7 1.500-7 2 0 3.500 1 3.500 3.500h3c0-2.500 1.500-3.500 3.500-3.500 3.500 0 4.500 4 1.500 7l-1 1.500 1 1.500c3 3 2 7-1.500 7-2 0-3.500-1.500-3.500-3.500h-3c0 2-1.500 3.500-3.500 3.500-3.500 0-4.500-4-1.500-7zh7" fill="none" stroke="#fff" strokeWidth="3.400" strokeLinejoin="round" /></Svg>,
  },
  { icon: <Svg w={28} h={28}><circle cx="14" cy="14" r="13.500" fill="#ff6c37" /><path d="M6.500 22l9-11 3 2.500-9 6.500z" fill="#ffe3d8" /><circle cx="20" cy="8.500" r="2.600" fill="#ffe3d8" /><path d="M13 14l3 2" stroke="#ff6c37" /></Svg> },
  {
    run: true,
    icon: <Svg w={28} h={28}><circle cx="14" cy="14" r="13.500" fill="#f9c936" /><path d="M9 1.500C17-2 26 3 27.500 13l-2 4-5-8L7 8z" fill="#8356f5" /><path d="M9 1.500C1 4-2 13 2 20c2 4 6 7 11 7.500l1-3C5 19 6 10 9 1.500z" fill="#f9832a" /><path d="M7 7.500c4 0 5-1.500 7-1.800 2 .3 4 1.800 7.500 1.800.5 8-2 12-7.500 15C8 20 6 15 7 7.500z" fill="#fff" /><circle cx="14" cy="13" r="2" fill="#2a2a66" /><path d="M13 13h2v5h-2z" fill="#2a2a66" /></Svg>,
  },
  {
    icon: <Svg w={26} h={26}><defs><linearGradient id="ij" x1="0" y1="0" x2="1" y2="1"><stop offset="0" stopColor="#fe315d" /><stop offset=".22" stopColor="#b04bd8" /><stop offset=".45" stopColor="#1f8cf5" /><stop offset="1" stopColor="#3f6bf5" /></linearGradient></defs><path d="M0 2l9-1 15-1 2 3v21l-8 2-18-2z" fill="url(#ij)" /><path d="M4 4h18v18H4z" fill="#080408" /><path d="M6 6.500h4M8 6.500v6M6 12.500h4M12 6.500h4v5c0 1-1.500 1.500-3.500 1M6 19.500h7" fill="none" stroke="#fff" strokeWidth="1.400" /></Svg>,
  },
  {
    run: true,
    icon: <Svg><path d="M22 0L8.500 12.500 3 8.500.5 10v2L20 27l2-6z" fill="#2489ca" /><path d="M22 8L3 22 .5 20.500v-2L22 0z" fill="#1070b3" /><path d="M22 0l8 3v24l-8 3-2-3V3z" fill="#28a5ea" /></Svg>,
  },
  {
    icon: <Svg w={24} h={26}><path d="M1 4v17c0 5 19 5 19 0V4z" fill="#a9bfdd" /><path d="M1 9.500c0 4 19 4 19 0M1 15.500c0 4 19 4 19 0" fill="none" stroke="#e8f0fa" /><path d="M14 5v19c4-1 6-2 6-3V4z" fill="#7d95b8" opacity=".7" /><ellipse cx="10.500" cy="4" rx="9.500" ry="4" fill="#dfe9f5" /><circle cx="17.500" cy="20" r="6" fill="#4fb32b" /><path d="M15.700 17l5 3-5 3z" fill="#fff" /></Svg>,
  },
  { run: true, icon: <Svg><circle cx="15" cy="15" r="14.500" fill="#fff" /><path d="M10 23.500A10 10 0 1 1 20 23.500l-1.500-4.500a6 6 0 1 0-7 0z" fill="#f0812b" /><circle cx="15" cy="14" r="3" fill="#1a3967" /><path d="M14 15h2l1.500 10h-5z" fill="#1a3967" /></Svg> },
  {
    run: true,
    icon: <Svg w={28} h={28}><defs><linearGradient id="ec" x1="0" y1="0" x2="0" y2="1"><stop offset="0" stopColor="#c9b6dd" /><stop offset=".35" stopColor="#5b3580" /><stop offset=".6" stopColor="#47216b" /><stop offset="1" stopColor="#b99fd0" /></linearGradient></defs><circle cx="14" cy="14" r="13.500" fill="url(#ec)" /><path d="M1 11.500h26M1 15h26M2 18.500h24" stroke="#e3d6f0" strokeWidth="1.400" /></Svg>,
  },
  {
    run: true,
    icon: <Svg><path d="M0 0h22v7h8v23H0z" fill="#f68b1f" /><path d="M24 0l6 6h-6z" fill="#f68b1f" /><path d="M19 6.500c-6-4-11 0-11 6 0 5 5 8 9 5 2-2 3-4 3-6h-5l-2 3" fill="none" stroke="#fff" strokeWidth="2.800" /><text x="15" y="28" fill="#fff" fontSize="7" fontWeight="700" textAnchor="middle" fontFamily="Open Sans">PDF</text></Svg>,
  },
  { run: true, icon: <Svg w={28} h={24}><path d="M0 0h28v23.500H0z" fill="#b5b5b5" /><path d="M1 3.500h26v19H1z" fill="#050505" /><path d="M1 3.500h26v5C16 8 6 12 1 16z" fill="#333" /><text x="3" y="12" fill="#fff" fontSize="8" fontFamily="Liberation Mono">C:\</text><path d="M17 11h7" stroke="#fff" strokeWidth="1.300" /></Svg> },
  {
    run: true,
    icon: (
      <svg width="40" height="36" viewBox="0 0 40 36" className="mt-[6px] ml-[11px]">
        <circle cx="9" cy="10" r="8.500" fill="#1a9fe8" /><circle cx="18" cy="20" r="9" fill="#0a7fd4" /><circle cx="13.500" cy="14.500" r="12.500" fill="#0c9be8" />
        <text x="13.500" y="22" fill="#fff" fontSize="21" fontWeight="700" textAnchor="middle" fontFamily="Open Sans">S</text>
        <circle cx="29" cy="24.500" r="9.800" fill="#2b2f31" stroke="#9a9a9a" /><text x="29" y="30.500" fill="#fff" fontSize="16" textAnchor="middle" fontFamily="Open Sans">1</text>
      </svg>
    ),
  },
  { run: true, active: true, icon: <Svg w={28} h={28}><path d="M14 4h12.500v20H14z" fill="#fff" stroke="#1f7244" /><path d="M16 7h4M16 10h4M16 13h4M16 16h4M16 19h4M16 22h4M22 7h3M22 10h3M22 13h3M22 16h3M22 19h3M22 22h3" stroke="#1f7244" strokeWidth="1.400" /><path d="M0 3l16-3v28L0 25z" fill="#1f7244" /><path d="M4.500 9l6.500 10M11 9L4.500 19" stroke="#fff" strokeWidth="2.300" /></Svg> },
];

function Taskbar() {
  return (
    <footer className="flex h-[50px] bg-[linear-gradient(90deg,#211d1b_0,#191817_400px,#221b19_520px,#1e1e1b_660px,#222c31_820px,#1f2a2f_940px,#0e1214_1080px,#0a0b0c_1130px,#211513_1220px,#0b0c0c_1330px,#080909_1450px,#15191f_1600px,#1d2229_1690px,#232323_1790px,#171a18_1920px)] text-white">
      {apps.map((a, i) => (
        <div key={i} className="mr-px flex w-[61px] shrink-0 flex-col items-center">
          <div className={`flex h-[47px] w-full items-center justify-center pt-[3px] pr-[2px] ${a.active ? "bg-[#434445]" : ""}`}>{a.icon}</div>
          {a.run && <div className={`h-[3px] bg-[#76b9ed] ${a.active ? "w-full" : "w-[51px]"}`} />}
        </div>
      ))}
      <div className="ml-auto flex items-center text-[14.500px] leading-none">
        <svg width="16" height="9" viewBox="0 0 16 9"><path d="M.7 8.300L8 1l7.300 7.300" fill="none" stroke="#fff" strokeWidth="1.500" /></svg>
        <svg width="21" height="16" viewBox="0 0 21 16" className="ml-[12px]"><path d="M1 2v3c0 3 5 3 5 0V2M2 0v2M5 0v2M0 2.500h7M3.500 7v7" fill="none" stroke="#eee" strokeWidth="1.200" /><path d="M8 3.500h11v10H3.500M19.500 6.500v4" fill="none" stroke="#999" /><path d="M8 5.500l6 6M14 5.500l-6 6" stroke="#fff" strokeWidth="1.300" /></svg>
        <svg width="16" height="16" viewBox="0 0 16 16" className="ml-[12px]"><path d="M1 16C1 7 7 1 16 1M5 16c0-7 4-11 11-11M9 16c0-4 3-7 7-7" fill="none" stroke="#ddd" strokeWidth="1.200" /><circle cx="14" cy="14" r="1.800" fill="#fff" /></svg>
        <svg width="21" height="18" viewBox="0 0 21 18" className="ml-[11px]"><path d="M1 6h2.500L7.500 2v14l-4-4H1zM10.500 6c1.500 2 1.500 4 0 6M13.500 4c2.500 3 2.500 7 0 10" fill="none" stroke="#fff" strokeWidth="1.200" /><path d="M16.500 1.500c4 4 4 11 0 15" fill="none" stroke="#777" /></svg>
        <span className="mr-px ml-[12px] w-[31px]">ENG</span>
        <span className="flex w-[94px] flex-col items-center text-[14.500px] leading-[23px]"><span>10:17 AM</span><span>31/5/2022</span></span>
        <svg width="32" height="31" viewBox="0 0 32 31" className="ml-[10px]"><path d="M0 1h20v17H8l-4 4v-4H0z" fill="#fff" /><path d="M4 5.500h12M4 9.500h12M4 13.500h8" stroke="#222" strokeWidth="1.300" /><circle cx="19.500" cy="20" r="10.500" fill="#3a3a3acc" stroke="#999" /><text x="19.500" y="25.500" fill="#fff" fontSize="14" fontWeight="600" textAnchor="middle" fontFamily="Open Sans">12</text></svg>
        <span className="mr-[5px] ml-[13px] h-full w-px bg-[#666]" />
      </div>
    </footer>
  );
}

export default function App() {
  return (
    <div className="h-[1080px] w-[1920px] overflow-hidden bg-[#e6e6e6] font-['Open_Sans',sans-serif]">
      <TitleBar />
      <Ribbon />
      <FormulaBar />
      <Sheet />
      <SheetTabs />
      <StatusBar />
      <Taskbar />
    </div>
  );
}
